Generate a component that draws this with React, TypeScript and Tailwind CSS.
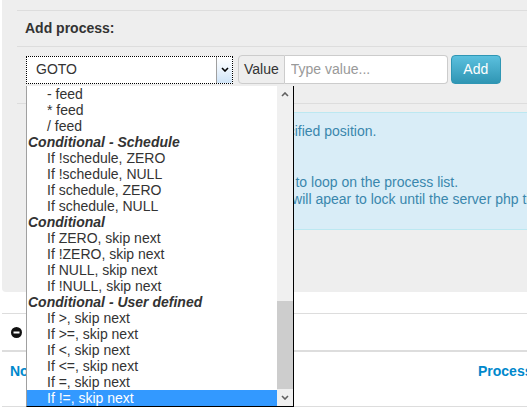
import React from "react";

type Item = { label: string; group?: boolean; selected?: boolean };

const items: Item[] = [
  { label: "- feed" },
  { label: "* feed" },
  { label: "/ feed" },
  { label: "Conditional - Schedule", group: true },
  { label: "If !schedule, ZERO" },
  { label: "If !schedule, NULL" },
  { label: "If schedule, ZERO" },
  { label: "If schedule, NULL" },
  { label: "Conditional", group: true },
  { label: "If ZERO, skip next" },
  { label: "If !ZERO, skip next" },
  { label: "If NULL, skip next" },
  { label: "If !NULL, skip next" },
  { label: "Conditional - User defined", group: true },
  { label: "If >, skip next" },
  { label: "If >=, skip next" },
  { label: "If <, skip next" },
  { label: "If <=, skip next" },
  { label: "If =, skip next" },
  { label: "If !=, skip next", selected: true },
];

const Chevron = ({ up, color = "#606060" }: { up?: boolean; color?: string }) => (
  <svg width="8" height="5" viewBox="0 0 8 5" className={up ? "rotate-180" : ""}>
    <path d="M1 1 L4 4 L7 1" fill="none" stroke={color} strokeWidth="1.6" />
  </svg>
);

const App = () => {
  return (
    <div className="relative w-[527px] h-[411px] overflow-hidden bg-white font-['Liberation_Sans',Arial,sans-serif] text-[#333] text-[14px]">
      {/* add process panel */}
      <div className="ml-[2px] h-[292px] bg-[#eeeeee] rounded-bl-[4px] pl-[15px] pt-[10px] overflow-hidden">
        <div className="border-t border-[#dddddd]" />
        <h4 className="h-[35px] flex items-center pl-[8px] font-bold text-[14px] text-[#333]">Add process:</h4>
        <div className="border-t border-[#dddddd]" />

        <div className="flex items-center pl-[9px] pt-[8px] h-[56px] pb-[19px]">
          <div className="flex w-[207px] h-[28px] border border-dotted border-black bg-white">
            <div className="flex-1 flex items-center pl-[9px] text-[#333]">GOTO</div>
            <div className="w-[16px] border-l border-[#a0a0a0] bg-gradient-to-b from-white via-[#eaf3fc] to-[#cfe4f8] flex items-center justify-center">
              <Chevron color="#000" />
            </div>
          </div>
          <div className="flex ml-[5px] h-[29px]">
            <span className="flex items-center px-[5px] bg-[#eeeeee] border border-[#cccccc] rounded-l-[4px] text-[#333]">Value</span>
            <input
              placeholder="Type value..."
              className="w-[163px] border border-l-0 border-[#cccccc] rounded-r-[4px] bg-white px-[6px] text-[14px] placeholder:text-[#999] outline-none"
            />
          </div>
          <button className="ml-[3px] w-[50px] h-[29px] rounded-[4px] border border-[#2f96b4] bg-gradient-to-b from-[#5bc0de] to-[#2f96b4] text-white text-[14px]">
            Add
          </button>
        </div>
        <div className="border-t border-[#dddddd]" />

        <div className="mt-[8px] ml-[9px] w-[520px] h-[118px] border border-[#bce8f1] bg-[#d9edf7] text-[#3a87ad] rounded-[4px] pl-[14px] pt-[10px] leading-[17px] whitespace-nowrap">
          <p>Moves the process list cursor to the specified position.</p>
          <p>Position 0 is the first</p>
          <p>process of the list.</p>
          <p>Combined with conditions it can be used to loop on the process list.</p>
          <p>If no exit condition exists, the Web page will apear to lock until the server php times out.</p>
        </div>
      </div>

      {/* process table */}
      <div className="ml-[2px] mt-[21px] border-t border-[#dddddd] h-[37px] flex items-center pl-[9px]">
        <svg width="11" height="11" viewBox="0 0 11 11">
          <circle cx="5.5" cy="5.5" r="5.5" fill="#111" />
          <rect x="2.5" y="4.5" width="6" height="2" fill="#fff" />
        </svg>
      </div>
      <div className="ml-[2px] border-t-2 border-[#dddddd] h-[57px] border-b flex pt-[9px] pl-[8px] font-bold text-[#0088cc]">
        <span>Node</span>
        <span className="ml-auto w-[49px] overflow-hidden whitespace-nowrap">Process list</span>
      </div>

      {/* open select list */}
      <div className="absolute left-[26px] top-[86px] w-[268px] h-[321px] bg-white border-l border-l-[#a0a0a0] border-r border-b border-black flex">
        <div className="flex-1">
          {items.map((it) => (
            <div
              key={it.label}
              className={
                it.group
                  ? "h-[16px] leading-[16px] pl-[1px] font-bold italic text-[#333]"
                  : it.selected
                  ? "h-[16px] leading-[16px] pl-[20px] bg-[#3399ff] text-white"
                  : "h-[16px] leading-[16px] pl-[20px] text-[#333]"
              }
            >
              {it.label}
            </div>
          ))}
        </div>
        <div className="w-[16px] bg-[#f0f0f0] flex flex-col">
          <div className="h-[17px] flex items-center justify-center">
            <Chevron up />
          </div>
          <div className="h-[198px]" />
          <div className="h-[88px] bg-[#cdcdcd]" />
          <div className="h-[17px] flex items-center justify-center">
            <Chevron />
          </div>
        </div>
      </div>
    </div>
  );
};

export default App;
